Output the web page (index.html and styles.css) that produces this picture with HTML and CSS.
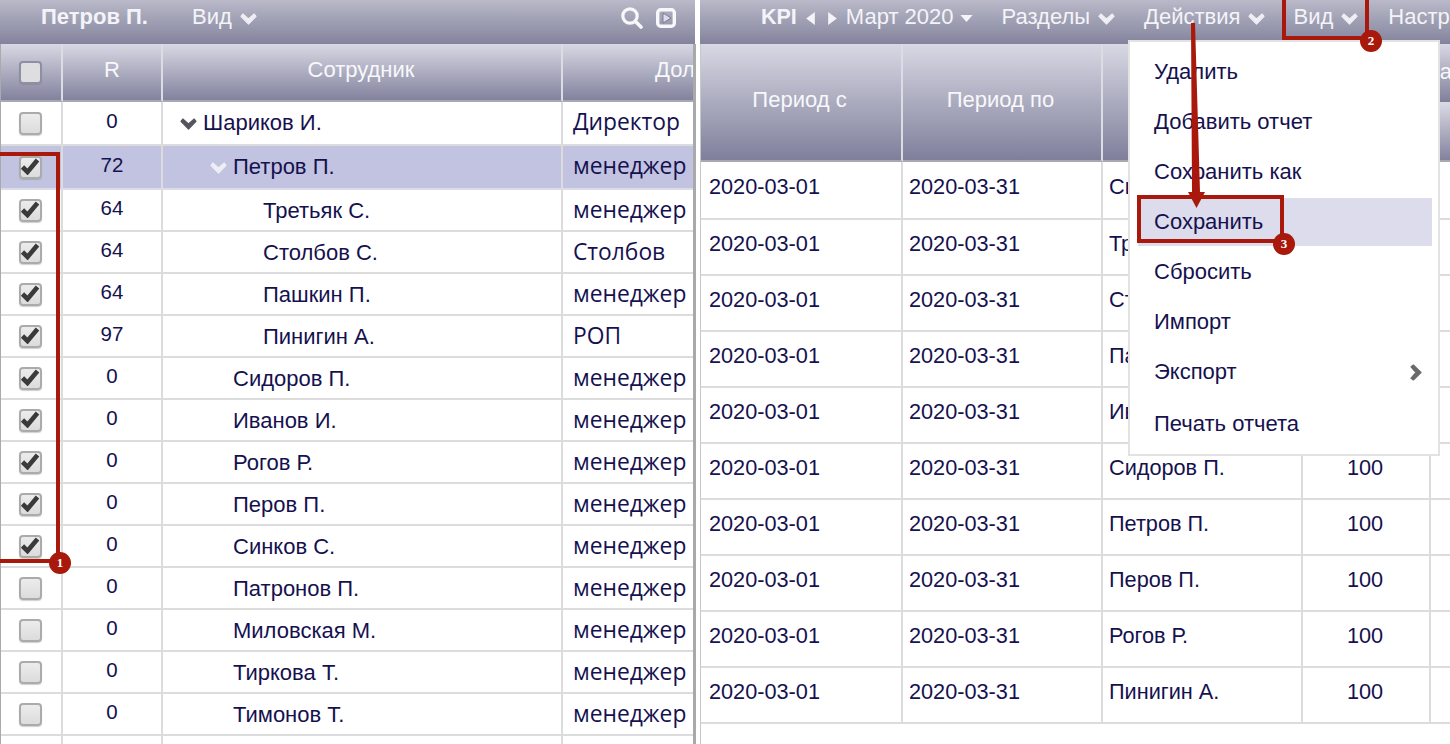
FILE: index.html
```html
<!DOCTYPE html>
<html lang="ru">
<head>
<meta charset="utf-8">
<title>KPI</title>
<link rel="stylesheet" href="styles.css">
</head>
<body>
<svg class="defs" width="0" height="0" aria-hidden="true">
  <symbol id="chev" viewBox="0 0 17 12"><path d="M2.8 1 L8.5 6 L14.2 1 L16 3.4 L8.5 11 L1 3.4 Z" fill="currentColor" stroke="currentColor" stroke-width="1.2" stroke-linejoin="round"/></symbol>
  <symbol id="tick" viewBox="0 0 20 18"><path d="M2.5 10 L7.5 15 L17.5 3" fill="none" stroke="currentColor" stroke-width="4.6" stroke-linejoin="miter"/></symbol>
</svg>
<main class="page">
  <section class="panel panel-left">
    <header class="toolbar toolbar-left">
      <b class="user">Петров П.</b>
      <span class="tool tool-view">Вид <svg class="chev"><use href="#chev"/></svg></span>
      <span class="spacer"></span>
      <svg class="icon-search" viewBox="0 0 22 22"><circle cx="9" cy="9" r="7.2" fill="none" stroke="currentColor" stroke-width="3.2"/><path d="M14.5 14.5 L20 20" stroke="currentColor" stroke-width="3.6" stroke-linecap="round"/></svg>
      <svg class="icon-play" viewBox="0 0 20 20"><rect x="1.7" y="1.7" width="16.6" height="16.6" rx="3" fill="none" stroke="currentColor" stroke-width="3.4"/><path d="M7 5 L15 10 L7 15 Z" fill="#dcdce8" stroke="#6d6d87" stroke-width=".8"/></svg>
    </header>
    <div class="tree">
      <div class="row head"><div class="cell c-check"><span class="check"></span></div><div class="cell c-r">R</div><div class="cell c-name-h">Сотрудник</div><div class="cell c-job-h">Должность</div></div>
      <div class="row tall"><div class="cell c-check"><span class="check"></span></div><div class="cell c-r">0</div><div class="cell c-name l0"><svg class="chev tree-chev"><use href="#chev"/></svg>Шариков И.</div><div class="cell c-job">Директор</div></div>
      <div class="row tall selected"><div class="cell c-check"><span class="check"><svg class="tick"><use href="#tick"/></svg></span></div><div class="cell c-r">72</div><div class="cell c-name l1"><svg class="chev tree-chev light"><use href="#chev"/></svg>Петров П.</div><div class="cell c-job">менеджер</div></div>
      <div class="row"><div class="cell c-check"><span class="check"><svg class="tick"><use href="#tick"/></svg></span></div><div class="cell c-r">64</div><div class="cell c-name l2">Третьяк С.</div><div class="cell c-job">менеджер</div></div>
      <div class="row"><div class="cell c-check"><span class="check"><svg class="tick"><use href="#tick"/></svg></span></div><div class="cell c-r">64</div><div class="cell c-name l2">Столбов С.</div><div class="cell c-job">Столбов</div></div>
      <div class="row"><div class="cell c-check"><span class="check"><svg class="tick"><use href="#tick"/></svg></span></div><div class="cell c-r">64</div><div class="cell c-name l2">Пашкин П.</div><div class="cell c-job">менеджер</div></div>
      <div class="row"><div class="cell c-check"><span class="check"><svg class="tick"><use href="#tick"/></svg></span></div><div class="cell c-r">97</div><div class="cell c-name l2">Пинигин А.</div><div class="cell c-job">РОП</div></div>
      <div class="row"><div class="cell c-check"><span class="check"><svg class="tick"><use href="#tick"/></svg></span></div><div class="cell c-r">0</div><div class="cell c-name l1">Сидоров П.</div><div class="cell c-job">менеджер</div></div>
      <div class="row"><div class="cell c-check"><span class="check"><svg class="tick"><use href="#tick"/></svg></span></div><div class="cell c-r">0</div><div class="cell c-name l1">Иванов И.</div><div class="cell c-job">менеджер</div></div>
      <div class="row"><div class="cell c-check"><span class="check"><svg class="tick"><use href="#tick"/></svg></span></div><div class="cell c-r">0</div><div class="cell c-name l1">Рогов Р.</div><div class="cell c-job">менеджер</div></div>
      <div class="row"><div class="cell c-check"><span class="check"><svg class="tick"><use href="#tick"/></svg></span></div><div class="cell c-r">0</div><div class="cell c-name l1">Перов П.</div><div class="cell c-job">менеджер</div></div>
      <div class="row"><div class="cell c-check"><span class="check"><svg class="tick"><use href="#tick"/></svg></span></div><div class="cell c-r">0</div><div class="cell c-name l1">Синков С.</div><div class="cell c-job">менеджер</div></div>
      <div class="row"><div class="cell c-check"><span class="check"></span></div><div class="cell c-r">0</div><div class="cell c-name l1">Патронов П.</div><div class="cell c-job">менеджер</div></div>
      <div class="row"><div class="cell c-check"><span class="check"></span></div><div class="cell c-r">0</div><div class="cell c-name l1">Миловская М.</div><div class="cell c-job">менеджер</div></div>
      <div class="row"><div class="cell c-check"><span class="check"></span></div><div class="cell c-r">0</div><div class="cell c-name l1">Тиркова Т.</div><div class="cell c-job">менеджер</div></div>
      <div class="row"><div class="cell c-check"><span class="check"></span></div><div class="cell c-r">0</div><div class="cell c-name l1">Тимонов Т.</div><div class="cell c-job">менеджер</div></div>
      <div class="row"><div class="cell c-check"></div><div class="cell c-r"></div><div class="cell c-name"></div><div class="cell c-job"></div></div>
    </div>
  </section>

  <section class="panel panel-right">
    <header class="toolbar toolbar-right">
      <b class="kpi">KPI</b>
      <svg class="tri" viewBox="0 0 8 12"><path d="M8 0 V12 L0 6 Z" fill="currentColor"/></svg>
      <svg class="tri tri-next" viewBox="0 0 8 12"><path d="M0 0 V12 L8 6 Z" fill="currentColor"/></svg>
      <span class="month">Март 2020</span>
      <svg class="tri-down" viewBox="0 0 14 8"><path d="M0 0 H14 L7 8 Z" fill="currentColor"/></svg>
      <span class="tool tool-sections">Разделы <svg class="chev"><use href="#chev"/></svg></span>
      <span class="tool tool-actions">Действия <svg class="chev"><use href="#chev"/></svg></span>
      <span class="tool tool-vid">Вид <svg class="chev"><use href="#chev"/></svg></span>
      <span class="tool tool-settings">Настройки</span>
    </header>
    <div class="grid">
      <div class="grow ghead">
        <div class="gc g1">Период с</div><div class="gc g2">Период по</div><div class="gc g3">Сотрудник</div>
        <div class="ggroup">
          <div class="gtop">Статус</div>
          <div class="gsub"><div class="gc g4">Вес</div><div class="gc g5"></div></div>
        </div>
      </div>
      <div class="grow first"><div class="gc g1">2020-03-01</div><div class="gc g2">2020-03-31</div><div class="gc g3">Синков С.</div><div class="gc g4">100</div><div class="gc g5"></div></div>
      <div class="grow"><div class="gc g1">2020-03-01</div><div class="gc g2">2020-03-31</div><div class="gc g3">Третьяк С.</div><div class="gc g4">100</div><div class="gc g5"></div></div>
      <div class="grow"><div class="gc g1">2020-03-01</div><div class="gc g2">2020-03-31</div><div class="gc g3">Столбов С.</div><div class="gc g4">100</div><div class="gc g5"></div></div>
      <div class="grow"><div class="gc g1">2020-03-01</div><div class="gc g2">2020-03-31</div><div class="gc g3">Пашкин П.</div><div class="gc g4">100</div><div class="gc g5"></div></div>
      <div class="grow"><div class="gc g1">2020-03-01</div><div class="gc g2">2020-03-31</div><div class="gc g3">Иванов И.</div><div class="gc g4">100</div><div class="gc g5"></div></div>
      <div class="grow"><div class="gc g1">2020-03-01</div><div class="gc g2">2020-03-31</div><div class="gc g3">Сидоров П.</div><div class="gc g4">100</div><div class="gc g5"></div></div>
      <div class="grow"><div class="gc g1">2020-03-01</div><div class="gc g2">2020-03-31</div><div class="gc g3">Петров П.</div><div class="gc g4">100</div><div class="gc g5"></div></div>
      <div class="grow"><div class="gc g1">2020-03-01</div><div class="gc g2">2020-03-31</div><div class="gc g3">Перов П.</div><div class="gc g4">100</div><div class="gc g5"></div></div>
      <div class="grow"><div class="gc g1">2020-03-01</div><div class="gc g2">2020-03-31</div><div class="gc g3">Рогов Р.</div><div class="gc g4">100</div><div class="gc g5"></div></div>
      <div class="grow"><div class="gc g1">2020-03-01</div><div class="gc g2">2020-03-31</div><div class="gc g3">Пинигин А.</div><div class="gc g4">100</div><div class="gc g5"></div></div>
    </div>
  </section>

  <nav class="menu">
    <div class="item">Удалить</div>
    <div class="item">Добавить отчет</div>
    <div class="item">Сохранить как</div>
    <div class="item hover">Сохранить</div>
    <div class="item">Сбросить</div>
    <div class="item">Импорт</div>
    <div class="item sub">Экспорт<svg class="chev-right" viewBox="0 0 12 17"><path d="M1 2.8 L6 8.5 L1 14.2 L3.4 16 L11 8.5 L3.4 1 Z" fill="currentColor" stroke="currentColor" stroke-width="1.2" stroke-linejoin="round"/></svg></div>
    <div class="item last">Печать отчета</div>
  </nav>

  <div class="mark mark-1"></div>
  <div class="mark mark-2"></div>
  <div class="mark mark-3"></div>
  <svg class="arrow" viewBox="0 0 30 190"><path d="M10 1 L14 1 L19 170 L24 170 L15.5 186 L7 170 L11 170 Z" fill="#a8190c"/></svg>
  <span class="badge badge-1">1</span>
  <span class="badge badge-2">2</span>
  <span class="badge badge-3">3</span>
</main>
</body>
</html>
```
FILE: styles.css
```css
* { box-sizing: border-box; }
html, body { margin: 0; height: 744px; overflow: hidden; background: #fff; }
body { font-family: "Liberation Sans", Arial, sans-serif; color: #15114f; }
.defs { position: absolute; }
.page { position: relative; display: flex; gap: 4px; width: 1450px; height: 744px; overflow: hidden; }
.panel { display: flex; flex-direction: column; height: 744px; overflow: hidden; }
.panel-left { width: 696px; flex: none; }
.panel-right { flex: 1; min-width: 0; }

.toolbar { display: flex; align-items: center; height: 44px; flex: none; padding-bottom: 10px; color: #f4f4f8; font-size: 22px; white-space: nowrap;
  background: linear-gradient(#b9b9c9, #83839d); }
.toolbar > * { flex: none; }
.toolbar-left { margin-right: 1px; padding-left: 41px; }
.user { font-size: 22px; }
.tool { display: inline-flex; align-items: center; gap: 8px; }
.tool-view { margin-left: 44px; }
.chev { width: 17px; height: 12px; color: #eeeef4; margin-top: 3px; flex: none; }
.toolbar .spacer { flex: 1; }
.icon-search { width: 22px; height: 22px; margin-right: 13px; margin-top: 2px; color: #f8f8fb; }
.icon-play { width: 20px; height: 20px; margin-right: 19px; margin-top: 2px; color: #f8f8fb; }

.tree { flex: 1; border-left: 1px solid #aaa; border-right: 3px solid #a9a9a9; overflow: hidden; }
.row { display: grid; grid-template-columns: 62px 100px 400px 130px; height: 42px; }
.row.tall { height: 44px; }
.row.selected { background: #c1c3e0; }
.row.selected .cell { border-bottom-color: #dcdce6; }
.cell { display: flex; align-items: center; border-right: 2px solid #dcdcdc; border-bottom: 2px solid #dcdcdc; white-space: nowrap; overflow: hidden; font-size: 22px; min-width: 0; }
.cell.c-job, .cell.c-job-h { border-right: 0; }
.c-check { justify-content: center; padding-right: 2px; }
.c-r { justify-content: center; padding-bottom: 4px; font-size: 20.5px; }
.c-name { padding-top: 2px; }
.tall .c-name { padding-top: 0; }
.c-job { padding: 0 0 2px 10px; font-family: "Open Sans", "Liberation Sans", sans-serif; font-size: 22.8px; }
.tall .c-job { padding-bottom: 4px; }
.l0 { padding-left: 40px; }
.l1 { padding-left: 70px; }
.l2 { padding-left: 100px; }
.tree-chev { margin: 2px 6px 0 -23px; color: #55555f; }
.tree-chev.light { color: #eeeef6; }

.row.head { height: 58px; background: linear-gradient(#d8d8e4, #7f7f9b); color: #f8f8fb; }
.head .cell { border-right-color: #dcdce4; border-bottom: 2px solid #a8a8b0; padding-bottom: 5px; font-size: 22px; }
.head .c-check { padding-right: 2px; padding-bottom: 0; }
.c-name-h { justify-content: center; padding-right: 2px; }
.c-job-h { justify-content: flex-start; padding-left: 92px; }

.check { display: flex; align-items: center; justify-content: center; width: 23px; height: 23px; border: 2px solid #ababab; border-radius: 4px; background: linear-gradient(#ececec, #dcdcdc); box-shadow: 0 1px 1px rgba(120,120,120,.35); color: #3a3a3a; }
.head .check { border-color: #8f8fa2; background: #dedee0; }
.tick { width: 20px; height: 18px; margin: -2px -3px 0; flex: none; }

.toolbar-right { padding-left: 61px; }
.kpi { font-size: 21.5px; }
.tri { width: 9px; height: 13px; margin-left: 9px; margin-top: 2px; color: #f4f4f8; }
.tri-next { margin-left: 13px; }
.month { margin-left: 9px; }
.tri-down { width: 13px; height: 7px; margin-left: 6px; margin-top: 2px; }
.tool-sections { margin-left: 29px; }
.tool-actions { margin-left: 29px; }
.tool-vid { margin-left: 28px; }
.tool-settings { margin-left: 30px; }

.grid { flex: 1; border-left: 1px solid #c8c8c8; overflow: hidden; font-size: 21.7px; }
.grow { display: grid; grid-template-columns: 202px 200px 200px 128px 1fr; height: 56px; }
.grow.first { height: 58px; }
.gc { display: flex; align-items: center; padding: 0 0 6px 6px; border-right: 2px solid #dcdcdc; border-bottom: 2px solid #dcdcdc; white-space: nowrap; overflow: hidden; min-width: 0; }
.g1 { padding-left: 8px; }
.g4 { justify-content: center; padding: 0 2px 6px 0; }
.g5 { border-right: 0; }
.ghead { height: 118px; color: #f8f8fb; }
.ghead > .gc, .gtop, .gsub { background: linear-gradient(#d8d8e4, #7f7f9b); }
.ghead .gc { justify-content: center; padding: 0 3px 5px 0; border-right-color: #dcdce4; border-bottom-color: #a8a8b0; font-size: 22px; }
.ggroup { grid-column: 4 / -1; display: flex; flex-direction: column; min-width: 0; }
.gtop { height: 60px; flex: none; padding: 15px 0 0 111px; border-bottom: 2px solid #d8d8e2; font-size: 22px; white-space: nowrap; overflow: hidden; }
.gsub { flex: 1; display: grid; grid-template-columns: 128px 1fr; }
.gsub .gc { background: none; }

.menu { position: absolute; left: 1128px; top: 40px; width: 312px; height: 416px; padding: 4px 6px 0 8px; background: #fff; border: 2px solid #e2e2e2; font-size: 22px; }
.item { display: flex; align-items: center; justify-content: space-between; height: 50px; padding: 2px 10px 0 16px; white-space: nowrap; }
.item.hover { background: #dddcec; height: 48px; margin-top: 2px; padding-top: 0; }
.item.last { height: 52px; padding-top: 4px; }
.chev-right { width: 12px; height: 17px; color: #6a6a6a; flex: none; }

.mark { position: absolute; border: 4px solid #a8190c; }
.mark-1 { left: -6px; top: 152px; width: 66px; height: 411px; }
.mark-2 { left: 1282px; top: -6px; width: 87px; height: 46px; }
.mark-3 { left: 1137px; top: 195px; width: 147px; height: 48px; }
.arrow { position: absolute; left: 1181px; top: 22px; width: 30px; height: 190px; }
.badge { position: absolute; display: flex; align-items: center; justify-content: center; width: 22px; height: 22px; border-radius: 50%; background: #a8190c; color: #fff; font: bold 13px "Liberation Serif", serif; }
.badge-1 { left: 49px; top: 552px; }
.badge-2 { left: 1360px; top: 30px; }
.badge-3 { left: 1273px; top: 233px; }
```
